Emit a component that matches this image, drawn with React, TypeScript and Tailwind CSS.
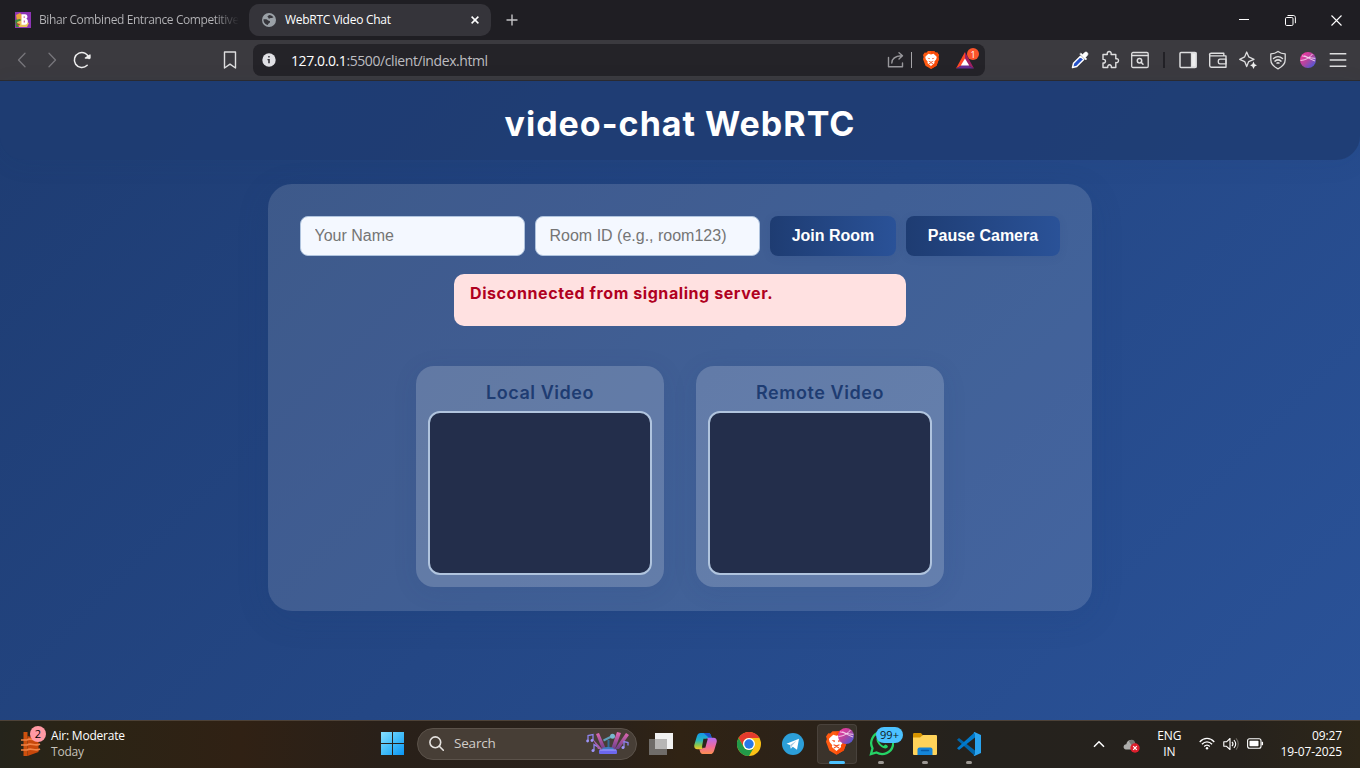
import React from "react";

const UI = "font-['Open_Sans',sans-serif]";

function BihariIcon() {
  return (
    <svg width="16" height="16" viewBox="0 0 16 16" className="shrink-0">
      <rect width="16" height="16" fill="#8e35b5" />
      <path d="M1 3l4-2 3 3-1 4-5 1z" fill="#e8a33a" />
      <path d="M0 8l5-1 4 4-2 4-6 0z" fill="#3d8a3c" />
      <path d="M2 10l5-2 7 3-2 4H4z" fill="#e9c45a" />
      <path d="M1 11l4 1-1 2z" fill="#c8382e" />
      <path d="M6.500 2.200h3.600c2.600 0 3.200 3.600 1.200 4.600 2.600 1 1.800 6-1.200 6H6.500z" fill="#fff" />
      <path d="M8.700 4.200h1v1.800h-1zM8.700 8.400h1.200v2.200H8.700z" fill="#c65a9c" />
    </svg>
  );
}

function Globe() {
  return (
    <svg width="14" height="14" viewBox="0 0 14 14" className="shrink-0">
      <circle cx="7" cy="7" r="7" fill="#9aa0a6" />
      <path d="M1.500 6.200h2.700c1.300 0 1.400 1.600 2.800 1.600 1 0 1.300.8.900 1.700-.5 1-2 .6-2 2.400C3.200 11.700 1.200 9 1.500 6.200z" fill="#35343a" />
      <path d="M7.300 1.900c1.700 0 3.300.9 4.200 2.400-1 .1-1.400.9-2.300.7-1-.3-1.100.8-2.300.6-.9-.2-.3-1.300-1.300-1.500-.5-1 .7-1.600 1.700-2.200z" fill="#35343a" />
    </svg>
  );
}

function BraveLion({ w, h }: { w: number; h: number }) {
  return (
    <svg width={w} height={h} viewBox="0 0 32 36">
      <path d="M10 0h12l3.500 3.500 3-.5L32 8l-1.300 4L32 16l-5 13.500L16 36 5 29.500 0 16l1.300-4L0 8l3.500-5 3 .5z" fill="#ff5a12" />
      <path d="M16 0h6l3.500 3.500 3-.5L32 8l-1.300 4L32 16l-5 13.500L16 36z" fill="#f84a08" />
      <path d="M16 7l5-1.700L26 10l1.500 2-1 4.500-4 5 .6 2.500L16 30l-7.100-6 .6-2.500-4-5-1-4.500L6 10l5-4.700z" fill="#fff" />
      <path d="M8.500 13.300l5.500 1-1.200 2.400zM23.500 13.300l-5.500 1 1.200 2.400z" fill="#f4511e" />
      <path d="M11.500 20.500l4.500 1.800 4.500-1.800M16 22v2.500M12 25.500l4-2 4 2" fill="none" stroke="#f4511e" strokeWidth="1.600" />
    </svg>
  );
}

function PinkBall({ size }: { size: number }) {
  return (
    <svg width={size} height={size} viewBox="0 0 16 16">
      <defs>
        <linearGradient id="ball" x1="0" y1="0" x2="1" y2="1">
          <stop offset=".15" stopColor="#e8399f" />
          <stop offset=".5" stopColor="#b4459f" />
          <stop offset=".95" stopColor="#3d5be0" />
        </linearGradient>
      </defs>
      <circle cx="8" cy="8" r="8" fill="url(#ball)" />
      <path d="M2 3.800c4 1 8 2.200 13.300 2.600M.500 8.500c5-.3 9-2.500 12-6.500M4.500 3.500c2.800 2.200 6 3.700 10.500 5.500" fill="none" stroke="#f7d5ee" strokeWidth=".9" />
    </svg>
  );
}

function TabStrip() {
  return (
    <div className="flex h-10 items-center bg-[#1f1e23] text-xs">
      <div className="flex w-[249px] items-center gap-2 pl-[15px]">
        <BihariIcon />
        <div className="w-[200px] bg-linear-to-r from-[#b5b5b8] from-88% to-[#1f1e23] bg-clip-text text-[12px] tracking-[-0.400px] whitespace-nowrap text-transparent">
          Bihar Combined Entrance Competitive
        </div>
      </div>
      <div className="flex h-8 w-[242px] items-center rounded-[10px] bg-[#35343a] pr-3 pl-[13px]">
        <Globe />
        <span className="ml-[9px] grow text-[12px] tracking-[-0.270px] whitespace-nowrap text-white">WebRTC Video Chat</span>
        <svg width="8" height="8" viewBox="0 0 8 8" stroke="#fff" strokeWidth="1.500">
          <path d="M.6.600l6.800 6.800M7.400.600L.600 7.400" />
        </svg>
      </div>
      <svg className="ml-[15px]" width="12" height="12" viewBox="0 0 12 12" stroke="#c3c3c6" strokeWidth="1.400">
        <path d="M6 .500v11M.500 6h11" />
      </svg>
      <div className="ml-auto flex items-center pr-[18px]">
        <svg width="10" height="10" viewBox="0 0 10 10" shapeRendering="crispEdges"><rect y="4" width="10" height="1" fill="#fff" /></svg>
        <svg className="ml-9" width="11" height="11" viewBox="0 0 11 11" fill="none" stroke="#fff">
          <rect x=".500" y="2.500" width="7.500" height="8" rx="1.200" />
          <path d="M2.500.500h5.700c1.400 0 2.200.800 2.200 2.200v5.500" />
        </svg>
        <svg className="ml-[35px]" width="11" height="11" viewBox="0 0 11 11" stroke="#fff" strokeWidth="1.100">
          <path d="M.500.500l10 10M10.500.500l-10 10" />
        </svg>
      </div>
    </div>
  );
}

function ToolIcon({ children, label }: { children: React.ReactNode; label: string }) {
  return (
    <button aria-label={label} className="flex h-7 w-[30px] shrink-0 items-center justify-center">
      <svg width="20" height="20" viewBox="0 0 20 20" fill="none" stroke="#dededf" strokeWidth="1.300" strokeLinejoin="round" strokeLinecap="round">
        {children}
      </svg>
    </button>
  );
}

function Toolbar() {
  return (
    <div className="flex h-[41px] items-center border-b border-[#2c2b2f] bg-[#3b3a3f]">
      <div className="flex w-[253px] items-center pl-[7px]">
        <ToolIcon label="Back"><path d="M13 3.200L6.500 10l6.500 6.800" stroke="#77767b" /></ToolIcon>
        <ToolIcon label="Forward"><path d="M7 3.200l6.500 6.800L7 16.800" stroke="#77767b" /></ToolIcon>
        <ToolIcon label="Reload">
          <path d="M15.200 15.300A7.500 7.500 0 1 1 17.200 8.500" stroke="#eee" strokeWidth="1.500" />
          <path d="M13.300 8h4.700v-3z" fill="#eee" stroke="#eee" />
        </ToolIcon>
        <div className="ml-auto pr-2">
          <ToolIcon label="Bookmark"><path d="M4.500 2h11v16L10 14.200 4.500 18z" stroke="#dededf" strokeWidth="1.400" /></ToolIcon>
        </div>
      </div>
      <div className="flex h-8 w-[732px] items-center rounded-lg bg-[#242328] pr-[5px] pl-[9px]">
        <svg width="14" height="14" viewBox="0 0 14 14">
          <circle cx="7" cy="7" r="6.700" fill="#e0e0e4" />
          <path d="M6.200 3h1.500v1.600H6.200zM5.500 6h2.300v4.200H6.200v-3h-.7z" fill="#35343a" />
        </svg>
        <span className="ml-[15px] grow text-[14px] tracking-[-0.410px] whitespace-nowrap text-[#bdbdc0]">
          <span className="text-white">127.0.0.1</span>:5500/client/index.html
        </span>
        <svg width="18" height="18" viewBox="0 0 18 18" fill="none" stroke="#98979b" strokeWidth="1.400" strokeLinecap="round" strokeLinejoin="round">
          <path d="M1.500 6.500v9.300h14V12M4.800 12c.2-4.300 2.500-6.800 9.500-7.200M12 1.700l3.500 3.100L12 8" />
        </svg>
        <span className="ml-[6px] h-4 w-px bg-[#a5a4a8]" />
        <span className="ml-[11px]"><BraveLion w={16} h={18} /></span>
        <span className="relative ml-[17px] h-[22px] w-[24px]">
          <svg className="mt-[3px]" width="18" height="17" viewBox="0 0 18 17">
            <path d="M9 0L0 16.500l9-5z" fill="#ff4724" />
            <path d="M9 0l9 16.500-9-5z" fill="#9e1f63" />
            <path d="M0 16.500h18l-9-5z" fill="#662d91" />
            <path d="M9 6.500l4.200 7H4.800z" fill="#fff" />
          </svg>
          <span className="absolute -top-px left-[11px] flex size-3 items-center justify-center rounded-full bg-[#fb542b] text-[9px] leading-none text-white">1</span>
        </span>
      </div>
      <div className="ml-auto flex items-center pr-[7px]">
        <ToolIcon label="Colour picker">
          <path d="M2.500 17.500l1-4.200 7-7 3.200 3.200-7 7z" fill="#2451c8" stroke="#fff" strokeWidth="1.500" />
          <path d="M10 4.300l5.700 5.700 1-1-1.200-1.600 2-2.200c1.500-1.700-1-4.200-2.700-2.700l-2.200 2L11 3.300z" fill="#fff" stroke="#fff" strokeWidth=".6" />
        </ToolIcon>
        <ToolIcon label="Extensions">
          <path d="M3 4.500h4.300c-1-4 4.800-4 3.800 0h4.700v4.300c3.600-1 3.600 4.600 0 3.700v5h-4.500c.8-3.600-4.300-3.600-3.500 0H3v-4.600c3.300.8 3.300-4.200 0-3.500z" strokeWidth="1.400" />
        </ToolIcon>
        <ToolIcon label="Find">
          <rect x="1.700" y="2.500" width="16.500" height="15" rx="1.300" />
          <path d="M2 5.500h16" />
          <circle cx="9.500" cy="10.700" r="2.200" strokeWidth="1.500" />
          <path d="M11.200 12.400l1.800 1.800" strokeWidth="1.500" />
        </ToolIcon>
        <span className="mr-[8px] ml-[8px] h-4 w-[2px] bg-[#222126]" />
        <ToolIcon label="Side panel">
          <rect x="2" y="2.500" width="16" height="15" rx="1" strokeWidth="1.500" />
          <path d="M13.500 3H18v14h-4.500z" fill="#eee" />
        </ToolIcon>
        <ToolIcon label="Wallet">
          <path d="M15.800 5.800V3.200H3.200C1 3.200 1 5.900 3 5.900h15v11.300H3.300c-1.100 0-1.600-.6-1.600-1.700v-11" strokeWidth="1.400" />
          <path d="M18 9.200h-6c-2.300 0-2.300 4.600 0 4.600h6z" />
        </ToolIcon>
        <ToolIcon label="Assistant">
          <path d="M8.700 2l2 4.800 5.300 2.500-5.300 2.300-2 5-2-5-5-2.300 5-2.500z" />
          <path d="M15.500 11.500l1.200 2.700 2.300 1.100-2.300 1.100-1.200 2.600-1.200-2.600-2.200-1.100 2.200-1.100z" fill="#eee" stroke="none" />
        </ToolIcon>
        <ToolIcon label="VPN">
          <path d="M10 1.500c2 1.500 4.500 2.300 7.200 2.300v6c0 4.200-3 7-7.200 9-4.200-2-7.200-4.800-7.200-9v-6c2.700 0 5.200-.8 7.200-2.300z" />
          <path d="M5.500 8.500c2.600-2.200 6.400-2.200 9 0M7 11.100c1.700-1.400 4.300-1.400 6 0M9 13.100c.6-.5 1.400-.5 2 0" strokeWidth="1.500" />
        </ToolIcon>
        <span className="flex w-[30px] justify-center"><PinkBall size={16} /></span>
        <ToolIcon label="Menu"><path d="M1.700 3.700h16.600M1.700 10h16.600M1.700 16.300h16.600" strokeWidth="1.500" strokeLinecap="butt" /></ToolIcon>
      </div>
    </div>
  );
}

function VideoBox({ title }: { title: string }) {
  return (
    <section className="flex h-[221px] w-[248px] flex-col rounded-[18px] bg-white/18 p-3 shadow-[0_4px_24px_rgba(30,60,114,0.1)]">
      <h2 className="mt-[3px] mb-[6px] text-center text-[18px] leading-6 font-semibold tracking-[0.550px] whitespace-nowrap text-[#1e3c72]">{title}</h2>
      <div className="h-[164px] rounded-xl border-2 border-[#b0c4de] bg-[#232e4b]" />
    </section>
  );
}

const fieldClass =
  "h-10 w-[225px] rounded-lg border border-[#b0c4de] bg-[#f4f8ff] pr-[14px] pl-[13.500px] font-['Liberation_Sans',sans-serif] text-base text-[#222] outline-none placeholder:text-[#757575]";
const buttonClass =
  "h-10 rounded-lg bg-[linear-gradient(90deg,#1e3c72_0%,#2a5298_100%)] pb-px font-['Liberation_Sans',sans-serif] text-base font-bold whitespace-nowrap text-white shadow-[0_2px_8px_rgba(30,60,114,0.1)]";

function ChatPage() {
  return (
    <main className="h-[639px] bg-[linear-gradient(135deg,#1e3c72_0%,#2a5298_100%)] font-['Inter',sans-serif]">
      <header className="flex h-[79px] items-center justify-center rounded-b-3xl bg-[#1e3c72]/85 pt-[7px] shadow-[0_4px_24px_rgba(30,60,114,0.08)]">
        <h1 className="text-[34px] leading-10 font-bold tracking-[1px] whitespace-nowrap text-white">video-chat WebRTC</h1>
      </header>
      <div className="mx-auto mt-6 flex h-[427px] w-[824px] flex-col items-center rounded-3xl bg-white/13 p-8 shadow-[0_8px_32px_rgba(30,60,114,0.15)]">
        <div className="flex gap-[10px]">
          <input className={fieldClass} placeholder="Your Name" />
          <input className={fieldClass} placeholder="Room ID (e.g., room123)" />
          <button className={`${buttonClass} w-[126px]`}>Join Room</button>
          <button className={`${buttonClass} w-[154px]`}>Pause Camera</button>
        </div>
        <div className="mt-[18px] h-[52px] w-[452px] shrink-0 rounded-[10px] bg-[#ffe1e1] px-4 pt-[7px] text-base font-bold tracking-[0.580px] whitespace-nowrap text-[#b00020]">
          <span>Disconnected from signaling server.</span>
        </div>
        <div className="mt-10 flex gap-8">
          <VideoBox title="Local Video" />
          <VideoBox title="Remote Video" />
        </div>
      </div>
    </main>
  );
}

function Tile({ children, state }: { children: React.ReactNode; state?: "active" | "open" }) {
  return (
    <div className={state === "active" ? "relative flex size-10 items-center justify-center rounded border border-white/8 bg-white/8" : "relative flex size-10 items-center justify-center"}>
      {children}
      {state === "active" && <span className="absolute -bottom-px left-[11px] h-[3px] w-4 rounded-full bg-[#4cc2ff]" />}
      {state === "open" && <span className="absolute bottom-0 left-[17px] h-[3px] w-[6px] rounded-full bg-[#9c9893]" />}
    </div>
  );
}

function SearchArt() {
  return (
    <svg width="44" height="24" viewBox="0 0 44 24">
      <defs>
        <linearGradient id="beam" x1="0" y1="0" x2="0" y2="1"><stop stopColor="#e86bb5" /><stop offset="1" stopColor="#7b3f9d" stopOpacity=".8" /></linearGradient>
      </defs>
      <path d="M10 2l3-1 7 16h-4zM35 1l-4-1-6 17h4zM43 3l-3-2-11 16h4z" fill="url(#beam)" />
      <path d="M6 6l10 11h-4z" fill="#a95fae" />
      <path d="M22.500 8v9" stroke="#356d96" strokeWidth="2" />
      <path d="M17.500 8.500l7-3.500" stroke="#5f9fb8" strokeWidth="2" />
      <circle cx="26.500" cy="4.200" r="2.500" fill="#79b9d0" />
      <ellipse cx="22" cy="17" rx="6" ry="2" fill="#417ec2" />
      <rect x="13" y="17.500" width="18" height="4.500" rx="1" fill="#6c67ed" />
      <path d="M14 18h16" stroke="#a4a2ff" />
      <g fill="none" stroke="#8d83ed" strokeWidth="1.300">
        <path d="M2 9V3.500l5-1v6M8 18.500v-6l3 2M38 15.500v-6l4 1v3" />
      </g>
      <g fill="#9e95fa"><circle cx="1.600" cy="9" r="1.400" /><circle cx="6" cy="8.500" r="1.400" /><circle cx="7" cy="18.500" r="1.500" /><circle cx="37" cy="15.500" r="1.500" /></g>
    </svg>
  );
}

function Taskbar() {
  return (
    <footer className="flex h-12 items-center border-t border-[#4d4238] bg-[linear-gradient(90deg,#25241b_0px,#2b2415_80px,#302114_240px,#292019_380px,#29211b_600px,#302314_680px,#2c2218_790px,#25221d_960px,#26221d_1240px,#2d2618_1360px)] pb-[2px]">
      <div className="flex w-[372px] items-center pl-5">
        <div className="relative h-[26px] w-[31px]">
          <svg width="22" height="26" viewBox="0 0 22 26">
            <path d="M3.500 1h4v24h-4z" fill="#ce510e" />
            <path d="M7.500 5l11 3v13l-11 4z" fill="#c8480b" />
            <path d="M1 9h6c3-3 8 2 13-1M1 14h6c4-3 8 2 13-1M1 19h6c4-3 8 2 13-1" stroke="#f18346" strokeWidth="1.600" fill="none" />
          </svg>
          <span className="absolute -top-[5px] left-[10px] flex size-4 items-center justify-center rounded-full bg-[#ff99a4] text-[11px] leading-none text-black">2</span>
        </div>
        <div className="text-[12px] leading-4 tracking-[-0.200px] whitespace-nowrap">
          <div className="text-white">Air: Moderate</div>
          <div className="text-[#c6c1ba]">Today</div>
        </div>
      </div>
      <div className="flex items-center gap-1">
        <Tile>
          <svg width="23" height="23" viewBox="0 0 23 23">
            <defs><linearGradient id="win" x1="0" y1="0" x2="1" y2="1"><stop stopColor="#87e0ff" /><stop offset=".5" stopColor="#44bdf8" /><stop offset="1" stopColor="#0a95f5" /></linearGradient></defs>
            <path d="M0 0h11v11H0zM12 0h11v11H12zM0 12h11v11H0zM12 12h11v11H12z" fill="url(#win)" />
          </svg>
        </Tile>
        <div className="ml-px flex h-8 w-[220px] items-center rounded-full border border-[#5b524a] bg-[#473e36] pr-[6px] pl-[11px]">
          <svg width="15" height="15" viewBox="0 0 15 15" fill="none" stroke="#e5e2df" strokeWidth="1.600" strokeLinecap="round">
            <circle cx="6.300" cy="6.300" r="5.400" /><path d="M10.300 10.300l4 4" />
          </svg>
          <span className="ml-[10px] grow text-[13.500px] tracking-[-0.200px] text-[#d1cdc9]">Search</span>
          <SearchArt />
        </div>
        <Tile>
          <svg width="24" height="22" viewBox="0 0 24 22">
            <path d="M6 0h18v16H6z" fill="#f2f2f2" /><path d="M0 6h18v16H0z" fill="#6f6c69" /><path d="M6 6h12v10H6z" fill="#b7b6b5" />
          </svg>
        </Tile>
        <Tile>
          <svg width="23" height="21" viewBox="0 0 24 22">
            <defs>
              <linearGradient id="cpA" x1="0" y1="0" x2="0" y2="1"><stop stopColor="#1596e8" /><stop offset=".45" stopColor="#25b6c0" /><stop offset=".75" stopColor="#8cc84b" /><stop offset="1" stopColor="#f8c62c" /></linearGradient>
              <linearGradient id="cpB" x1="0" y1="0" x2="0" y2="1"><stop stopColor="#b46cf2" /><stop offset=".55" stopColor="#ef6a9b" /><stop offset="1" stopColor="#fd8f50" /></linearGradient>
            </defs>
            <path d="M7 0h8c1.500 0 2.300 1 2.700 2.500l.8 2.500h-3c-2 0-2.800 1-3.300 3L10.500 14c-.6 2-1.600 3-3.500 3H3.500C.5 17-.3 14.500.4 12L3 3.500C3.800 1 5 0 7 0z" fill="url(#cpA)" />
            <path d="M10 0h5c1.500 0 2.300 1 2.700 2.500l.8 2.500h-3z" fill="#1c51c9" />
            <path d="M17 22H9c-1.500 0-2.300-1-2.700-2.500L5.500 17h1.600c2 0 2.800-1 3.400-3L12.300 8c.6-2 1.500-3 3.200-3h5c3 0 3.800 2.500 3.100 5L21 18.500c-.8 2.500-2 3.500-4 3.500z" fill="url(#cpB)" />
            <path d="M9.800 6h4.600l-2.600 9.500H8.200z" fill="#2a251e" />
          </svg>
        </Tile>
        <Tile>
          <svg width="24" height="24" viewBox="0 0 24 24">
            <circle cx="12" cy="12" r="12" fill="#fbc116" />
            <path d="M1.600 6A12 12 0 0 1 22.400 6H12a6 6 0 0 0-5.200 9z" fill="#e33b2e" />
            <path d="M1.600 6A12 12 0 0 0 12 24l5.200-9A6 6 0 0 1 6.800 15z" fill="#229a49" />
            <circle cx="12" cy="12" r="6" fill="#fff" /><circle cx="12" cy="12" r="4.700" fill="#2878e8" />
          </svg>
        </Tile>
        <Tile>
          <svg width="22" height="22" viewBox="0 0 22 22">
            <circle cx="11" cy="11" r="11" fill="#2c9fd9" />
            <path d="M4.500 10.800L17 5.800l-2 11-4.200-3-2 2-.8-3.700z" fill="#fff" /><path d="M8 12.100l6.500-4.300-4.700 5.200-.7 2.200z" fill="#a9cbe3" />
          </svg>
        </Tile>
        <Tile state="active">
          <span className="mb-px -ml-px"><BraveLion w={21} h={24} /></span>
          <span className="absolute top-[3px] left-[20px]"><PinkBall size={16} /></span>
        </Tile>
        <Tile state="open">
          <svg width="25" height="25" viewBox="0 0 25 25">
            <path d="M2 23l1.500-5.700A11 11 0 1 1 7.500 21.500z" fill="none" stroke="#25d366" strokeWidth="2.300" />
            <path d="M8.500 6.500c-4 2.500 5 13.500 9.700 10.300 1.700-1.800 0-2.600-2-3.400l-1.500 1.500c-2.200-.8-3.600-2.300-4.300-4l1.200-1.600C11 7.800 10.200 5.800 8.500 6.500z" fill="#25d366" />
          </svg>
          <span className="absolute top-[3px] left-[15px] flex h-4 w-[27px] items-center justify-center rounded-full bg-[#4cc2ff] text-[11px] leading-none text-[#101820]">99+</span>
        </Tile>
        <Tile state="open">
          <svg width="24" height="22" viewBox="0 0 24 22">
            <path d="M0 1.200Q0 0 1.200 0H8l2 2.500L8 5H0z" fill="#d69400" />
            <path d="M0 4.500h7L10 2h13q1 0 1 1v18q0 1-1 1H1q-1 0-1-1z" fill="#ffd35a" />
            <path d="M4.500 22v-5.500q0-2 2-2h11q2 0 2 2V22z" fill="#1585d8" />
            <path d="M8.500 17.500h7" stroke="#075ba8" strokeWidth="1.400" strokeLinecap="round" />
          </svg>
        </Tile>
        <Tile state="open">
          <svg width="24" height="24" viewBox="0 0 24 24">
            <path d="M0 7.800l2-1.800L18 18.500V24z" fill="#0065a9" />
            <path d="M0 16.200l2 1.800L18 5.500V0z" fill="#007acc" />
            <path d="M17.500 0L24 3v18l-6.500 3L16.500 23q1.500.3 1.500-1.500v-19Q18 .800 16.500 1z" fill="#29a3ef" />
          </svg>
        </Tile>
      </div>
      <div className="ml-auto flex items-center pr-[18px] text-[12px] leading-4 tracking-[-0.100px] whitespace-nowrap text-white">
        <svg width="12" height="8" viewBox="0 0 12 8" fill="none" stroke="#fff" strokeWidth="1.500"><path d="M1 6.800l5-5 5 5" /></svg>
        <svg className="mt-1 ml-[18px]" width="17" height="14" viewBox="0 0 17 14">
          <path d="M3 10.500C-.7 10 .2 5.300 3.300 5.300 4-.5 11.500-.5 12 4.800l2 5.700z" fill="#aeaeac" />
          <path d="M6 2.500C8-.5 12 .500 12.400 5L9 7z" fill="#777774" />
          <circle cx="12" cy="9" r="4.700" fill="#dd1f2d" /><path d="M10.200 7.200l3.600 3.600M13.800 7.200l-3.600 3.600" stroke="#fff" strokeWidth="1.200" />
        </svg>
        <div className="ml-[17px] text-center"><div>ENG</div><div>IN</div></div>
        <svg className="ml-[18px]" width="16" height="13" viewBox="0 0 16 13" fill="none" stroke="#fff" strokeWidth="1.250">
          <path d="M.700 5C5 .300 11 .300 15.300 5M2.900 7.200c3-3.200 7.200-3.200 10.200 0M5.200 9.500c1.700-1.800 3.900-1.800 5.600 0" /><circle cx="8" cy="11.200" r="1.200" fill="#fff" stroke="none" />
        </svg>
        <svg className="ml-2" width="16" height="14" viewBox="0 0 16 14" fill="none" stroke="#fff" strokeWidth="1.100" strokeLinejoin="round">
          <path d="M.800 4.800h2.700L7 1.500v11L3.500 9.300H.800zM9 4.800c1.200 1.300 1.200 3.100 0 4.400M10.900 3c2.200 2.400 2.200 5.600 0 8" /><path d="M13 1.300c3 3.200 3 8.200 0 11.400" stroke="#6d6963" />
        </svg>
        <svg className="ml-2" width="17" height="11" viewBox="0 0 17 11" fill="none" stroke="#fff" strokeWidth="1.100">
          <rect x=".600" y=".800" width="13.400" height="9.400" rx="2" /><rect x="2.500" y="2.700" width="9" height="5.600" rx=".700" fill="#fff" stroke="none" /><path d="M15.300 3.800v3.400" strokeWidth="1.500" />
        </svg>
        <div className="ml-4 text-right"><div>09:27</div><div>19-07-2025</div></div>
      </div>
    </footer>
  );
}

export default function App() {
  return (
    <div className={`flex h-[768px] w-[1360px] flex-col overflow-hidden ${UI}`}>
      <TabStrip />
      <Toolbar />
      <ChatPage />
      <Taskbar />
    </div>
  );
}
